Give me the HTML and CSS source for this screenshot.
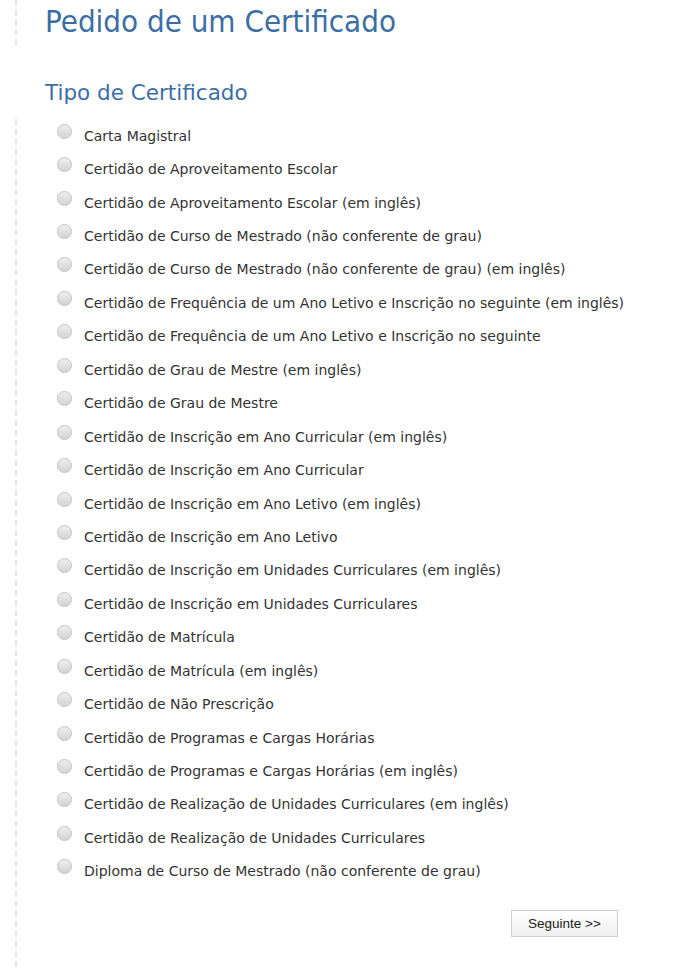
FILE: index.html
```html
<!DOCTYPE html>
<html lang="pt">
<head>
<meta charset="UTF-8">
<title>Pedido de um Certificado</title>
<link rel="stylesheet" href="styles.css">
</head>
<body>
<section class="page">
  <div class="title-box">
    <h1>Pedido de um Certificado</h1>
  </div>
  <h2>Tipo de Certificado</h2>
  <form class="form" method="POST">
    <ul class="options">
      <li><label><input type="radio" name="tipo"> Carta Magistral</label></li>
      <li><label><input type="radio" name="tipo"> Certidão de Aproveitamento Escolar</label></li>
      <li><label><input type="radio" name="tipo"> Certidão de Aproveitamento Escolar (em inglês)</label></li>
      <li><label><input type="radio" name="tipo"> Certidão de Curso de Mestrado (não conferente de grau)</label></li>
      <li><label><input type="radio" name="tipo"> Certidão de Curso de Mestrado (não conferente de grau) (em inglês)</label></li>
      <li><label><input type="radio" name="tipo"> Certidão de Frequência de um Ano Letivo e Inscrição no seguinte (em inglês)</label></li>
      <li><label><input type="radio" name="tipo"> Certidão de Frequência de um Ano Letivo e Inscrição no seguinte</label></li>
      <li><label><input type="radio" name="tipo"> Certidão de Grau de Mestre (em inglês)</label></li>
      <li><label><input type="radio" name="tipo"> Certidão de Grau de Mestre</label></li>
      <li><label><input type="radio" name="tipo"> Certidão de Inscrição em Ano Curricular (em inglês)</label></li>
      <li><label><input type="radio" name="tipo"> Certidão de Inscrição em Ano Curricular</label></li>
      <li><label><input type="radio" name="tipo"> Certidão de Inscrição em Ano Letivo (em inglês)</label></li>
      <li><label><input type="radio" name="tipo"> Certidão de Inscrição em Ano Letivo</label></li>
      <li><label><input type="radio" name="tipo"> Certidão de Inscrição em Unidades Curriculares (em inglês)</label></li>
      <li><label><input type="radio" name="tipo"> Certidão de Inscrição em Unidades Curriculares</label></li>
      <li><label><input type="radio" name="tipo"> Certidão de Matrícula</label></li>
      <li><label><input type="radio" name="tipo"> Certidão de Matrícula (em inglês)</label></li>
      <li><label><input type="radio" name="tipo"> Certidão de Não Prescrição</label></li>
      <li><label><input type="radio" name="tipo"> Certidão de Programas e Cargas Horárias</label></li>
      <li><label><input type="radio" name="tipo"> Certidão de Programas e Cargas Horárias (em inglês)</label></li>
      <li><label><input type="radio" name="tipo"> Certidão de Realização de Unidades Curriculares (em inglês)</label></li>
      <li><label><input type="radio" name="tipo"> Certidão de Realização de Unidades Curriculares</label></li>
      <li><label><input type="radio" name="tipo"> Diploma de Curso de Mestrado (não conferente de grau)</label></li>
    </ul>
    <div class="actions">
      <button type="submit">Seguinte &gt;&gt;</button>
    </div>
  </form>
</section>
</body>
</html>
```

FILE: styles.css
```css
* {
  margin: 0;
  padding: 0;
  box-sizing: border-box;
}

body {
  background: #fff;
  color: #333;
  font-family: 'DejaVu Sans', sans-serif;
  font-size: 14px;
}

.page {
  padding-left: 15px;
}

.title-box {
  border-left: 2px dashed #e4e4e4;
  height: 45px;
  padding-left: 28px;
}

h1 {
  font-family: 'DejaVu Sans Condensed', 'DejaVu Sans', sans-serif;
  font-weight: normal;
  font-size: 31px;
  line-height: 42px;
  color: #3c6ea6;
}

h2 {
  font-family: 'DejaVu Sans', sans-serif;
  font-weight: normal;
  font-size: 21.5px;
  line-height: 26px;
  color: #3c6ea6;
  margin-top: 35px;
  padding-left: 30px;
  height: 38px;
}

.form {
  border-left: 2px dashed #e4e4e4;
  padding-left: 40px;
  padding-bottom: 40px;
}

.options {
  list-style: none;
}

.options li {
  height: 33.45px;
  display: flex;
  align-items: center;
}

.options li:first-child {
  margin-top: 1px;
}

.options label {
  display: flex;
  align-items: center;
  gap: 12px;
}

.options input {
  appearance: none;
  width: 15px;
  height: 15px;
  border-radius: 50%;
  border: 1px solid #c2c2c2;
  background: linear-gradient(#eeeeee, #d3d3d3);
  margin-top: -9px;
}

.actions {
  display: flex;
  justify-content: flex-end;
  padding-right: 82px;
  margin-top: 22px;
}

.actions button {
  width: 107px;
  height: 27px;
  border: 1px solid #cfcfcf;
  background: linear-gradient(#ffffff, #efefef);
  font-family: 'Liberation Sans', Arial, sans-serif;
  font-size: 13.5px;
  color: #222;
}
```
